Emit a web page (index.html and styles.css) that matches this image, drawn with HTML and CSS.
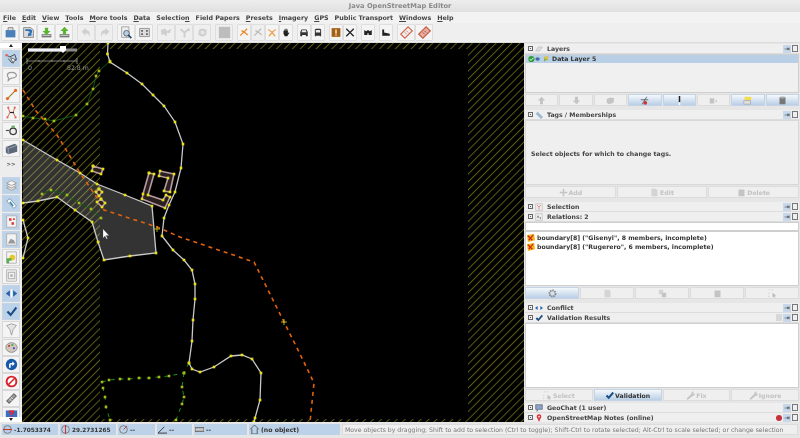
FILE: index.html
```html
<!DOCTYPE html>
<html lang="en">
<head>
<meta charset="utf-8">
<title>Java OpenStreetMap Editor</title>
<link rel="stylesheet" href="styles.css">
</head>
<body>
<div class="app">
  <header class="title">Java OpenStreetMap Editor</header>
  <nav class="menu">
    <span><u>F</u>ile</span><span><u>E</u>dit</span><span><u>V</u>iew</span><span><u>T</u>ools</span><span><u>M</u>ore tools</span><span><u>D</u>ata</span><span>Selectio<u>n</u></span><span>Field Papers</span><span><u>P</u>resets</span><span><u>I</u>magery</span><span><u>G</u>PS</span><span>Public Transport</span><span><u>W</u>indows</span><span><u>H</u>elp</span>
  </nav>
  <div class="toolbar">
    <div class="group">
      <button class="tb"><svg viewBox="0 0 16 16"><path d="M2 5h12v9H2z" fill="#4a7fb8"/><path d="M5 5V2h6v3" fill="#ddd" stroke="#777"/></svg></button>
      <button class="tb"><svg viewBox="0 0 16 16"><path d="M2 2h9l3 3v9H2z" fill="#ddd" stroke="#777"/><path d="M4 4h6c3 0 3 4 1 6l2 1-6 2 1-5 1 1c1-2 0-3-2-3H4z" fill="#2b6fb0"/></svg></button>
      <button class="tb"><svg viewBox="0 0 16 16"><path d="M2 10h12v4H2z" fill="#777"/><path d="M3 11h10v1H3z" fill="#ddd"/><path d="M6 2h4v4h3l-5 5-5-5h3z" fill="#5cb531"/></svg></button>
      <button class="tb"><svg viewBox="0 0 16 16"><path d="M2 10h12v4H2z" fill="#777"/><path d="M3 11h10v1H3z" fill="#ddd"/><path d="M6 10h4V6h3L8 1 3 6h3z" fill="#5cb531"/></svg></button>
    </div>
    <div class="group">
      <button class="tb off"><svg viewBox="0 0 16 16"><path d="M7 2v3c4 0 6 3 5 9-1-4-2-5-5-5v3L2 7z" fill="#cfcfcf"/></svg></button>
      <button class="tb off"><svg viewBox="0 0 16 16"><path d="M9 2v3c-4 0-6 3-5 9 1-4 2-5 5-5v3l5-5z" fill="#cfcfcf"/></svg></button>
    </div>
    <div class="group">
      <button class="tb"><svg viewBox="0 0 16 16"><path d="M2 1h9v13H2z" fill="#eee" stroke="#999"/><circle cx="8" cy="9" r="3.5" fill="#bcd" stroke="#457"/><path d="M10 11l4 4" stroke="#246" stroke-width="2"/></svg></button>
      <button class="tb"><svg viewBox="0 0 16 16"><path d="M2 3h12v10H2z" fill="#ddd" stroke="#888"/><path d="M4 5h2v2H4zm6 0h2v2h-2zM4 9h2v2H4zm6 0h2v2h-2z" fill="#555"/></svg></button>
    </div>
    <div class="group">
      <button class="tb off"><svg viewBox="0 0 16 16"><path d="M1 5l5-2 3 3 5-3-2 6-3-1-1 5-3-3-3 1z" fill="#cfcfcf"/></svg></button>
      <button class="tb off"><svg viewBox="0 0 16 16"><path d="M8 14V8L3 4m5 4l5-4 1 2" stroke="#cfcfcf" stroke-width="2.4" fill="none"/></svg></button>
      <button class="tb off"><svg viewBox="0 0 16 16"><path d="M3 8a5 5 0 0 1 9-3l1-2v5H8l2-1a3 3 0 0 0-5 1zm10 0a5 5 0 0 1-9 3l-1 2V8h5l-2 1a3 3 0 0 0 5-1z" fill="#cfcfcf"/></svg></button>
    </div>
    <div class="group">
      <button class="tb off"><svg viewBox="0 0 16 16"><path d="M1 1h14v14H1z" fill="#bdbdbd"/></svg></button>
    </div>
    <div class="group narrow">
      <button class="tb"><svg viewBox="0 0 16 16"><path d="M2 13l6-6 6 5M8 7l5-5M4 5l4 2" stroke="#e8892a" stroke-width="2" fill="none"/></svg></button>
      <button class="tb off"><svg viewBox="0 0 16 16"><path d="M2 13l6-6 6 5M8 7l5-5M4 5l4 2" stroke="#bbb" stroke-width="2" fill="none"/></svg></button>
      <button class="tb"><svg viewBox="0 0 16 16"><path d="M2 3l6 5 6-5M8 8l-5 6M8 8l5 6" stroke="#f0a050" stroke-width="2" fill="none"/></svg></button>
      <button class="tb"><svg viewBox="0 0 16 16"><path d="M5 5V3h1v2h1V2h2v3h1V3h1v6l2-2v2l-3 5H6L4 10V5z" fill="#222"/></svg></button>
    </div>
    <div class="group narrow">
      <button class="tb"><svg viewBox="0 0 16 16"><path d="M2 14V7l2-4h8l2 4v7h-3v-2H5v2z" fill="#333"/><path d="M5 4.500h6l1 3H4z" fill="#eee"/></svg></button>
      <button class="tb"><svg viewBox="0 0 16 16"><path d="M3 14V3l2-1h6l2 1v11h-2v-1H5v1z" fill="#333"/><path d="M4.500 4h7v4h-7z" fill="#eee"/></svg></button>
    </div>
    <div class="group narrow">
      <button class="tb"><svg viewBox="0 0 16 16"><path d="M1 1h14v14H1z" fill="#a45f10"/><path d="M7 3h2v7H7zm0 8h2v2H7z" fill="#fff"/></svg></button>
      <button class="tb"><svg viewBox="0 0 16 16"><path d="M2 2l12 12M14 2L2 14" stroke="#222" stroke-width="2"/></svg></button>
    </div>
    <div class="group narrow">
      <button class="tb"><svg viewBox="0 0 16 16"><path d="M2 4l3 2 3-2 3 2 3-2v8H9V9H7v3H2z" fill="#222"/></svg></button>
    </div>
    <div class="group narrow">
      <button class="tb"><svg viewBox="0 0 16 16"><path d="M2 3h3v5l9 2v3H2z" fill="#222"/></svg></button>
    </div>
    <div class="group">
      <button class="tb"><svg viewBox="0 0 16 16"><path d="M10 1l5 5L6 15l-5-5z" fill="#eee" stroke="#d06a50" stroke-width="1.500"/><path d="M6 8l2 2m0-4l2 2" stroke="#d06a50"/></svg></button>
      <button class="tb"><svg viewBox="0 0 16 16"><path d="M10 1l5 5L6 15l-5-5z" fill="#e8b0a0" stroke="#c85c44" stroke-width="1.500"/><path d="M6 8l2 2m0-4l2 2" stroke="#933"/></svg></button>
    </div>
  </div>

  <main class="main">
    <aside class="side">
      <div class="arrow up"></div>
      <div class="tool on"><svg viewBox="0 0 16 16"><path d="M2 4l4 2 6-3 2 6-6 4-4-5" fill="none" stroke="#333"/><path d="M7 7l3 7 1-3 3-1z" fill="#fff" stroke="#222" stroke-width=".7"/><circle cx="2" cy="4" r="1.500" fill="#d65"/></svg></div>
      <div class="tool"><svg viewBox="0 0 16 16"><path d="M8 3c4 0 6 2 6 4s-4 3-6 3-3 2-4 3c0-2 1-3 0-4S1 3 8 3z" fill="none" stroke="#999" stroke-width="1.500"/></svg></div>
      <div class="tool"><svg viewBox="0 0 16 16"><path d="M3 13L13 3" stroke="#a67c2a" stroke-width="1.500"/><circle cx="3" cy="13" r="2" fill="#e9662c"/><circle cx="13" cy="3" r="2" fill="#e9662c"/></svg></div>
      <div class="tool"><svg viewBox="0 0 16 16"><path d="M4 2l2 6-3 6M12 2l-2 6 3 6" stroke="#d06a50" fill="none" stroke-width="1.200"/><path d="M6 8h5" stroke="#222" stroke-width="1.500"/><circle cx="4" cy="2" r="1.300" fill="#d65"/><circle cx="12" cy="2" r="1.300" fill="#d65"/><circle cx="3" cy="14" r="1.300" fill="#d65"/><circle cx="13" cy="14" r="1.300" fill="#d65"/></svg></div>
      <div class="tool"><svg viewBox="0 0 16 16"><path d="M1 8h4" stroke="#555" stroke-width="1.500"/><circle cx="10" cy="9" r="4" fill="#eee" stroke="#333" stroke-width="1.500"/><path d="M8 2h4v3H8z" fill="#6a6"/></svg></div>
      <div class="tool"><svg viewBox="0 0 16 16"><path d="M1 6l11-4 3 2v8L4 15l-3-2z" fill="#5b6878"/><path d="M1 6l3 2 11-4M4 8v7" stroke="#aab" fill="none"/></svg></div>
      <div class="more">&gt;&gt;</div>
      <div class="tool on"><svg viewBox="0 0 16 16"><path d="M2 11l6-3 6 3-6 3z" fill="#ddd" stroke="#999"/><path d="M2 8l6-3 6 3-6 3z" fill="#eee" stroke="#999"/><path d="M2 5l6-3 6 3-6 3z" fill="#f6f6f6" stroke="#999"/></svg></div>
      <div class="tool on"><svg viewBox="0 0 16 16"><path d="M2 5l4-3 8 9-3 3z" fill="#fff" stroke="#68a"/><path d="M6 6l4 5" stroke="#48a" stroke-width="2"/></svg></div>
      <div class="tool on"><svg viewBox="0 0 16 16"><path d="M2 1h12v14H2z" fill="#f3f3f3" stroke="#aaa"/><path d="M5 4h3v3H5zm3 5h3v3H8zm2-5h2v2h-2z" fill="#d33"/></svg></div>
      <div class="tool on"><svg viewBox="0 0 16 16"><path d="M2 1h12v14H2z" fill="#f3f3f3" stroke="#aaa"/><path d="M4 12l3-5 4 2 2 4H4z" fill="#999"/></svg></div>
      <div class="tool"><svg viewBox="0 0 16 16"><path d="M2 1h12v14H2z" fill="#f3f3f3" stroke="#aaa"/><circle cx="9" cy="8" r="3.500" fill="#e8c82a"/><path d="M2 9h6v3H5v3H2z" fill="#56b04a"/></svg></div>
      <div class="tool"><svg viewBox="0 0 16 16"><path d="M2 1h12v14H2z" fill="#f3f3f3" stroke="#aaa"/><path d="M4 4h8v8H4z" fill="none" stroke="#999"/><circle cx="8" cy="8" r="2" fill="#bbb"/></svg></div>
      <div class="tool on"><svg viewBox="0 0 16 16"><path d="M1 8l5-4v8zM15 8l-5-4v8z" fill="#2a62a8"/><path d="M7 3h2v10H7z" fill="#fff"/></svg></div>
      <div class="tool on"><svg viewBox="0 0 16 16"><path d="M2 9l2-2 3 3 6-8 2 2-8 10z" fill="#1d4f86"/></svg></div>
      <div class="tool"><svg viewBox="0 0 16 16"><path d="M2 3l6-2 6 2-4 5-2 7-2-7z" fill="#e4e4e4" stroke="#999"/></svg></div>
      <div class="tool"><svg viewBox="0 0 16 16"><ellipse cx="8" cy="8" rx="7" ry="6" fill="#cfc6bc" stroke="#888"/><circle cx="5" cy="6" r="1.300" fill="#c44"/><circle cx="9" cy="5" r="1.300" fill="#4a4"/><circle cx="11" cy="9" r="1.300" fill="#44c"/></svg></div>
      <div class="tool tight"><svg viewBox="0 0 16 16"><circle cx="8" cy="8" r="7" fill="#1759a8"/><path d="M5 12V8q0-2 2-2h2V4l3 3-3 3V8H7v4z" fill="#fff"/></svg></div>
      <div class="tool tight"><svg viewBox="0 0 16 16"><circle cx="8" cy="8" r="6" fill="#fff" stroke="#d8232a" stroke-width="2.400"/><path d="M4 12l8-8" stroke="#d8232a" stroke-width="2"/></svg></div>
      <div class="tool tight"><svg viewBox="0 0 16 16"><path d="M2 11l9-9 3 3-9 9z" fill="#999" stroke="#333"/><path d="M5 8l3 3m-1-5l3 3" stroke="#eee"/></svg></div>
      <div class="tool tight clip"><svg viewBox="0 0 16 16"><path d="M1 3h14v10H1z" fill="#3a6fc4"/><path d="M5 3h6v4H9v2H7V6h2V5H7v1H5zm2 7h2v2H7z" fill="#e22"/></svg></div>
      <div class="arrow down"></div>
    </aside>

    <div class="map">
      <svg class="canvas" viewBox="22 43 502 379" preserveAspectRatio="none">
        <defs>
          <pattern id="hatch" width="5.600" height="5.600" patternUnits="userSpaceOnUse" patternTransform="rotate(45)">
            <path d="M0 0V5.600" stroke="#5c5c14" stroke-width="2"/>
          </pattern>
          <marker id="node" markerWidth="4" markerHeight="4" refX="2" refY="2" markerUnits="userSpaceOnUse"><rect width="2.600" height="2.600" x=".7" y=".7" fill="#e8e018"/></marker>
          <marker id="gnode" markerWidth="4" markerHeight="4" refX="2" refY="2" markerUnits="userSpaceOnUse"><rect width="2.600" height="2.600" x=".7" y=".7" fill="#a8b818"/></marker>
        </defs>
        <rect x="22" y="43" width="502" height="379" fill="#000"/>
        <rect x="22" y="43" width="78" height="379" fill="url(#hatch)"/>
        <rect x="468" y="43" width="56" height="379" fill="url(#hatch)"/>
        <rect x="100" y="43" width="368" height="6" fill="url(#hatch)"/>
        <rect x="100" y="419" width="368" height="3" fill="url(#hatch)"/>
        <path class="area" d="M23 140L57 160 80 173 97 184 125 195 152 206 156 253 130 256 104 260 98 242 92 222 75 210 57 197 38 201 23 203z"/>
        <polyline class="green" points="110,61 99,71 96,76 93,89 87,104 76,115 54,121 45,119 33,118 23,116"/>
        <polyline class="green" points="42,194 51,190 67,195 79,203 91,209 101,218"/>
        <polyline class="green dash" points="189,363 184,373 169,376 159,377 149,378 139,378 129,379 120,379 109,380 102,382 103,388 105,397 106,407 110,420"/>
        <polyline class="green dash" points="184,373 182,387 184,397 182,404 176,420"/>
        <polyline class="way" points="108,43 107.500,54 110,62 127,73 142,84 153,95 164,106 175,122 183,144 181,168 175,192 169,205 164,218 162,236 173,250 184,260 192,270 195,284 195,299 193,320 192,341 189,363 192,369 200,372 214,367 231,356 242,355 252,359 261,373 260,400 255,418 254,422"/>
        <polyline class="way" points="23,140 57,160 80,173 97,184 125,195 152,206 156,253 130,256 104,260 98,242 92,222 75,210 57,197 38,201 23,203"/>
        <polyline class="way" points="23,220 28,238 23,258"/>
        <polyline class="orange" points="23,90 36,111 57,135 62,143 80,173 100,202 104,210 157,227 180,237 254,262 284,322 300,354 314,383 310,422"/>
        <path class="bld" d="M93 166l10 3-2 5-9-3zM99 189l3 3-3 4-3-4zM101 199l4 4-3 4-5-5zM149 173l5 1-6 21 15 5 3-5 4 2-5 11-23-9 1-5zM160 171l14 3-4 18-6-1 4-13-9-2z"/>
        <path class="cross" d="M281 322h6m-3-3v6M154 229h6m-3-3v6"/>
        <path class="cursor" d="M103 229v9l2-2 1.500 3 1-.5-1.500-3h3z"/>
        <rect class="track" x="28" y="48.500" width="49" height="3"/>
        <rect class="track-on" x="28" y="48.500" width="35" height="3"/>
        <path class="thumb" d="M60 46h6v4l-3 3-3-3z"/>
        <path class="scale" d="M27 61h50M27 58v6M77 58v6M39 60v2M52 60v2M64 60v2"/>
        <text class="scale-text" x="28" y="70">0</text>
        <text class="scale-text" x="67" y="70">82.8 m</text>
      </svg>
    </div>

    <section class="dock">
      <div class="pane">
        <div class="head"><i class="ex"></i><svg class="ic" viewBox="0 0 12 12"><path d="M1 9l4-6h6l-4 6z" fill="#ddd" stroke="#bbb"/></svg><b>Layers</b><span class="pin"></span></div>
        <div class="list layers">
          <div class="layer"><svg viewBox="0 0 24 9"><circle cx="4" cy="4.500" r="3.500" fill="#2f9e3a"/><path d="M2 4.500l1.500 1.500 3-3" stroke="#fff" fill="none"/><ellipse cx="11" cy="4.500" rx="2.500" ry="2" fill="#3d6ca8"/><path d="M18 8l1-6h4l-1 4h-2z" fill="#7da83a"/><circle cx="21" cy="3" r="2" fill="#e4c23a"/></svg>Data Layer 5</div>
        </div>
        <div class="btns g8">
          <span class="btn"><svg viewBox="0 0 12 12"><path d="M6 1l5 5H8v5H4V6H1z" fill="#c4c4c4"/></svg></span>
          <span class="btn"><svg viewBox="0 0 12 12"><path d="M6 11l5-5H8V1H4v5H1z" fill="#c4c4c4"/></svg></span>
          <span class="btn"><svg viewBox="0 0 12 12"><path d="M1 4l5-2 5 1-1 6-6 2-3-2z" fill="#c4c4c4"/></svg></span>
          <span class="btn act"><svg viewBox="0 0 12 12"><path d="M1 5h10M9 1L3 11" stroke="#444"/><circle cx="7" cy="9" r="2.500" fill="#c33"/></svg></span>
          <span class="btn act"><svg viewBox="0 0 12 12"><path d="M5 0h2v8H5z" fill="#222"/><path d="M5 9h2v3H5z" fill="#fff"/></svg></span>
          <span class="btn"><svg viewBox="0 0 12 12"><path d="M1 3h6v7H1zM9 4v5l2-2z" fill="#c4c4c4"/></svg></span>
          <span class="btn act"><svg viewBox="0 0 12 12"><path d="M2 1h9v5H2z" fill="#f4dc50"/><path d="M1 6h9v5H1z" fill="#ddd" stroke="#aaa"/></svg></span>
          <span class="btn act"><svg viewBox="0 0 12 12"><path d="M2 2h8v9H2z" fill="#777"/><ellipse cx="6" cy="2" rx="4" ry="1.500" fill="#aaa"/></svg></span>
        </div>
      </div>
      <div class="pane tags">
        <div class="head"><i class="ex"></i><svg class="ic" viewBox="0 0 12 12"><path d="M1 4l3-3 8 8-3 3z" fill="#9cb8d4"/></svg><b>Tags / Memberships</b><span class="pin"></span></div>
        <div class="note">Select objects for which to change tags.</div>
        <div class="btns g3">
          <span class="btn"><svg viewBox="0 0 12 12"><path d="M5 1h2v4h4v2H7v4H5V7H1V5h4z" fill="#c4c4c4"/></svg>Add</span>
          <span class="btn"><svg viewBox="0 0 12 12"><path d="M2 1h6l2 2v8H2z" fill="#d4d4d4"/></svg>Edit</span>
          <span class="btn"><svg viewBox="0 0 12 12"><path d="M2 2h8v9H2z" fill="#c4c4c4"/></svg>Delete</span>
        </div>
      </div>
      <div class="pane sel">
        <div class="head"><i class="ex"></i><svg class="ic" viewBox="0 0 12 12"><path d="M1 1h10v10H1z" fill="#eee" stroke="#bbb"/><path d="M3 3l3 3 3-3M6 6v4" stroke="#d65" fill="none"/></svg><b>Selection</b><span class="pin"></span></div>
        <div class="head"><i class="ex"></i><svg class="ic" viewBox="0 0 12 12"><path d="M1 1h10v10H1z" fill="#eee" stroke="#bbb"/><path d="M3 4h3v3H3zm4 2h2v3H7z" fill="#999"/></svg><b>Relations: 2</b><span class="pin"></span></div>
        <div class="filter"></div>
        <div class="list rels">
          <div class="rel"><svg viewBox="0 0 9 9"><path d="M0 1l8-1 1 7-8 2z" fill="#f2b418"/><path d="M1 2l5 5M7 1L2 7" stroke="#d02020" stroke-width="1.300"/></svg>boundary[8] ("Gisenyi", 8 members, incomplete)</div>
          <div class="rel"><svg viewBox="0 0 9 9"><path d="M0 1l8-1 1 7-8 2z" fill="#f2b418"/><path d="M1 2l5 5M7 1L2 7" stroke="#d02020" stroke-width="1.300"/></svg>boundary[8] ("Rugerero", 6 members, incomplete)</div>
        </div>
        <div class="btns g5">
          <span class="btn act"><svg viewBox="0 0 12 12"><circle cx="6" cy="6" r="4" fill="none" stroke="#888" stroke-width="2.600" stroke-dasharray="2 1"/></svg></span>
          <span class="btn"><svg viewBox="0 0 12 12"><path d="M2 1h6l2 2v8H2z" fill="#d4d4d4"/></svg></span>
          <span class="btn"><svg viewBox="0 0 12 12"><path d="M1 1h6v6H1z" fill="#d4d4d4"/><path d="M5 5h6v6H5z" fill="#c4c4c4"/></svg></span>
          <span class="btn"><svg viewBox="0 0 12 12"><path d="M2 2h8v9H2z" fill="#c4c4c4"/></svg></span>
          <span class="btn"><svg viewBox="0 0 12 12"><path d="M1 1h2M5 1h2M1 5v2M1 9v2" stroke="#ccc"/><path d="M6 5v6l2-1 1 2 1-1-1-2h2z" fill="#bbb"/></svg></span>
        </div>
      </div>
      <div class="pane val">
        <div class="head"><i class="ex"></i><svg class="ic" viewBox="0 0 12 12"><path d="M0 6l4-3v6zM12 6L8 3v6z" fill="#2a62a8"/></svg><b>Conflict</b><span class="pin"></span></div>
        <div class="head"><i class="ex"></i><svg class="ic" viewBox="0 0 12 12"><path d="M1 7l2-2 2 2 5-6 2 2-7 8z" fill="#1d4f86"/></svg><b>Validation Results</b><span class="mini"></span><span class="pin"></span></div>
        <div class="list results"></div>
        <div class="btns g4">
          <span class="btn"><svg viewBox="0 0 12 12"><path d="M1 1h2M5 1h2M1 5v2M1 9v2" stroke="#ccc"/><path d="M6 5v6l2-1 1 2 1-1-1-2h2z" fill="#bbb"/></svg>Select</span>
          <span class="btn act dark"><svg viewBox="0 0 12 12"><path d="M1 7l2-2 2 2 5-6 2 2-7 8z" fill="#1d4f86"/></svg>Validation</span>
          <span class="btn"><svg viewBox="0 0 12 12"><path d="M1 10l6-6 1-3 3 0-2 2 1 1 2-1-1 3-3 1-6 5z" fill="#c4c4c4"/></svg>Fix</span>
          <span class="btn"><svg viewBox="0 0 12 12"><path d="M1 10l6-6 1-3 3 0-2 2 1 1 2-1-1 3-3 1-6 5z" fill="#c4c4c4"/></svg>Ignore</span>
        </div>
      </div>
      <div class="head chat"><i class="ex"></i><svg class="ic" viewBox="0 0 12 12"><path d="M1 1h10v7H5l-2 3V8H1z" fill="#8ca0c8" stroke="#567"/></svg><b>GeoChat (1 user)</b><span class="pin"></span></div>
      <div class="head"><i class="ex"></i><svg class="ic" viewBox="0 0 12 12"><circle cx="6" cy="4" r="3.500" fill="#d8303a"/><path d="M4 7h4l-2 5z" fill="#d8303a"/><circle cx="6" cy="4" r="1.200" fill="#fff"/></svg><b>OpenStreetMap Notes (online)</b><span class="stop"></span><span class="pin"></span></div>
    </section>
  </main>

  <footer class="status">
    <span class="field num lat"><svg viewBox="0 0 10 10"><circle cx="5" cy="5" r="4.300" fill="none" stroke="#777"/><path d="M0 5h10" stroke="#c33" stroke-width="1.200"/></svg>-1.7053374</span>
    <span class="field num lon"><svg viewBox="0 0 10 10"><circle cx="5" cy="5" r="4.300" fill="none" stroke="#777"/><path d="M5 0v10" stroke="#c33" stroke-width="1.200"/></svg>29.2731265</span>
    <span class="field hdg"><svg viewBox="0 0 10 10"><circle cx="5" cy="5" r="4.300" fill="none" stroke="#777"/><path d="M5 5l4-4" stroke="#c33"/></svg>--</span>
    <span class="field ang"><svg viewBox="0 0 10 10"><path d="M0 9h10M0 9l7-7" stroke="#333" fill="none"/></svg>--</span>
    <span class="field len"><svg viewBox="0 0 10 10"><path d="M0 3h10v4H0z" fill="#ccc" stroke="#555"/></svg>--</span>
    <span class="field obj"><svg viewBox="0 0 10 10"><path d="M0 5l5-5 5 5M2 4v6h6V4" fill="none" stroke="#555"/></svg>(no object)</span>
    <span class="help">Move objects by dragging; Shift to add to selection (Ctrl to toggle); Shift-Ctrl to rotate selected; Alt-Ctrl to scale selected; or change selection</span>
  </footer>
</div>
</body>
</html>
```

FILE: styles.css
```css
* { box-sizing: border-box; }
html, body { margin: 0; padding: 0; background: #ededed; }
body { font-family: "DejaVu Sans", sans-serif; font-size: 6.2px; color: #3c3c3c; }
.app { width: 800px; height: 438px; overflow: hidden; display: flex; flex-direction: column; background: #ededed; filter: blur(.4px); }

.title { height: 12px; line-height: 12px; text-align: center; font-weight: bold; font-size: 6.7px; color: #8a8a8a; background: linear-gradient(#ededed, #e0e0e0); flex: none; }
.menu { height: 11px; line-height: 11px; flex: none; display: flex; gap: 6px; padding-left: 3px; font-weight: bold; font-size: 6.35px; background: #f2f2f2; color: #444; white-space: nowrap; }
.menu u { text-decoration-thickness: .5px; }

.toolbar { height: 20px; flex: none; display: flex; gap: 4px; padding: 1px 0 1px 1px; background: #efefef; border-bottom: 1px solid #dcdcdc; }
.group { display: flex; }
.tb { width: 18px; height: 17px; padding: 2px 1px; margin: 0; border: 1px solid #dedede; border-radius: 1px; background: #f4f4f4; display: flex; align-items: center; justify-content: center; }
.tb svg { width: 13px; height: 13px; display: block; }
.tb.off { background: #efefef; }
.narrow .tb { width: 14px; }
.narrow .tb svg { width: 11px; height: 11px; }

.main { height: 379px; flex: none; display: flex; }
.side { width: 22px; flex: none; display: flex; flex-direction: column; align-items: center; background: #ededed; overflow: hidden; position: relative; }
.arrow { width: 22px; height: 5px; background: #fff; flex: none; display: flex; justify-content: center; align-items: center; }
.arrow::after { content: ""; border-left: 2.5px solid transparent; border-right: 2.5px solid transparent; }
.arrow.up::after { border-bottom: 3px solid #222; }
.arrow.down::after { border-top: 3px solid #222; }
.arrow.down { position: absolute; bottom: 0; left: 0; }
.tool { width: 18px; height: 17px; margin-top: 1px; flex: none; border: 1px solid #d8d8d8; background: #f4f4f4; display: flex; align-items: center; justify-content: center; }
.tool:nth-child(2) { margin-top: 2px; }
.tool.tight { margin-top: 0; }
.tool.on { background: #bcd2e8; border-color: #c4d4e4; }
.tool svg { width: 13px; height: 13px; display: block; }
.tool.clip { height: 14px; }
.more { height: 10px; line-height: 10px; margin: 2px 0 7px; font-size: 5.5px; font-weight: bold; color: #555; flex: none; }

.map { width: 502px; flex: none; background: #000; }
.canvas { width: 502px; height: 379px; display: block; }
.area { fill: rgba(255,255,255,.2); }
.way, .green, .orange { fill: none; }
.way { stroke: #c8c8c8; stroke-width: 1.300; marker-start: url(#node); marker-mid: url(#node); marker-end: url(#node); }
.green { stroke: #0c5a12; stroke-width: 1; marker-start: url(#gnode); marker-mid: url(#gnode); marker-end: url(#gnode); }
.green.dash { stroke: #109a1c; stroke-dasharray: 4 5; }
.orange { stroke: #e0620c; stroke-width: 1.600; stroke-dasharray: 4 4; }
.bld { fill: #2a2020; stroke: #b89aa0; stroke-width: 1.600; marker-start: url(#node); marker-mid: url(#node); }
.cross { stroke: #d8d020; stroke-width: .8; fill: none; }
.cursor { fill: #fff; stroke: #555; stroke-width: .3; }
.track { fill: #8a8a8a; }
.track-on { fill: #f0f0f8; }
.thumb { fill: #fff; }
.scale { stroke: #9a9a9a; stroke-width: .8; fill: none; }
.scale-text { fill: #9a9a9a; font-size: 6.2px; font-family: "DejaVu Sans", sans-serif; }

.dock { flex: 1; min-width: 0; display: flex; flex-direction: column; padding: 1px 0 0 1px; background: #e6e6e6; overflow: hidden; }
.pane { display: flex; flex-direction: column; flex: none; }
.head { height: 10px; line-height: 9px; flex: none; display: flex; align-items: center; background: #efefef; margin-right: 1px; border-bottom: 1px solid #dcdcdc; color: #444; }
.head b { margin-left: 4px; white-space: nowrap; }
.ex { width: 5px; height: 5px; margin-left: 3px; border: 1px solid #666; background: radial-gradient(#555 35%, transparent 45%); flex: none; }
.ic { width: 8px; height: 8px; margin-left: 2px; flex: none; }
.pin { width: 15px; height: 8px; margin-left: auto; margin-right: 1px; flex: none; display: flex; align-items: center; }
.pin::before { content: "\21E5"; width: 9px; height: 8px; line-height: 8px; font-size: 6.5px; text-align: center; background: #c6d8ea; color: #333; }
.pin::after { content: ""; width: 5px; height: 5px; margin-left: 1px; border: 1px solid #777; }
.mini { width: 6px; height: 7px; margin-left: auto; background: #d8d8d8; flex: none; }
.mini + .pin, .stop + .pin { margin-left: 1px; }
.stop { width: 6px; height: 6px; margin-left: auto; border-radius: 50%; background: #c8303a; flex: none; }

.list { background: #fff; border: 1px solid #cfcfcf; flex: none; margin-right: 1px; }
.layers { height: 39px; background: #f0f0f0; }
.layer { height: 8px; line-height: 8px; background: #b9cfe6; font-weight: bold; color: #333; display: flex; align-items: center; gap: 1px; }
.layer svg { width: 25px; height: 8px; flex: none; }
.rels { height: 55px; padding-top: 1px; }
.rel { height: 9px; line-height: 9px; font-weight: bold; color: #333; display: flex; align-items: center; gap: 2px; padding-left: 1px; white-space: nowrap; }
.rel svg { width: 8px; height: 8px; flex: none; }
.results { height: 65px; }
.filter { height: 9px; background: #fff; border: 1px solid #cfcfcf; margin-right: 1px; flex: none; }

.btns { display: grid; height: 13px; flex: none; gap: 1px; margin-right: 1px; padding-top: 1px; }
.g8 { grid-template-columns: repeat(8, 1fr); }
.g3 { grid-template-columns: repeat(3, 1fr); }
.g5 { grid-template-columns: repeat(5, 1fr); }
.g4 { grid-template-columns: repeat(4, 1fr); }
.btn { border: 1px solid #dcdcdc; background: #efefef; color: #c2c2c2; font-weight: bold; display: flex; align-items: center; justify-content: center; gap: 1px; min-width: 0; white-space: nowrap; }
.btn svg { width: 9px; height: 9px; flex: none; }
.btn.act { background: linear-gradient(#f4f8fc, #b9cfe6); border-color: #c4d4e4; }
.btn.dark { color: #333; }

.tags { margin-top: 4px; }
.note { height: 65px; line-height: 65px; padding-left: 5px; background: #efefef; border: 1px solid #d8d8d8; margin-right: 1px; font-weight: bold; color: #444; white-space: nowrap; }
.sel { margin-top: 4px; }
.val { margin-top: 4px; }
.chat { margin-top: 2px; }

.status { height: 16px; flex: none; display: flex; gap: 2px; padding: 2px 2px 3px; background: #e6e6e6; white-space: nowrap; }
.field { background: #bcd2e8; font-weight: bold; color: #333; display: flex; align-items: center; gap: 2px; padding-left: 1px; flex: none; }
.field svg { width: 9px; height: 9px; flex: none; }
.num { font-size: 5.8px; }
.lat, .lon { width: 56px; }
.hdg { width: 37px; }
.ang { width: 35px; }
.len { width: 53px; }
.obj { width: 91px; }
.help { flex: 1; min-width: 0; overflow: hidden; padding-left: 2px; line-height: 9px; background: #efefef; color: #777; border: 1px solid #dcdcdc; }
```
